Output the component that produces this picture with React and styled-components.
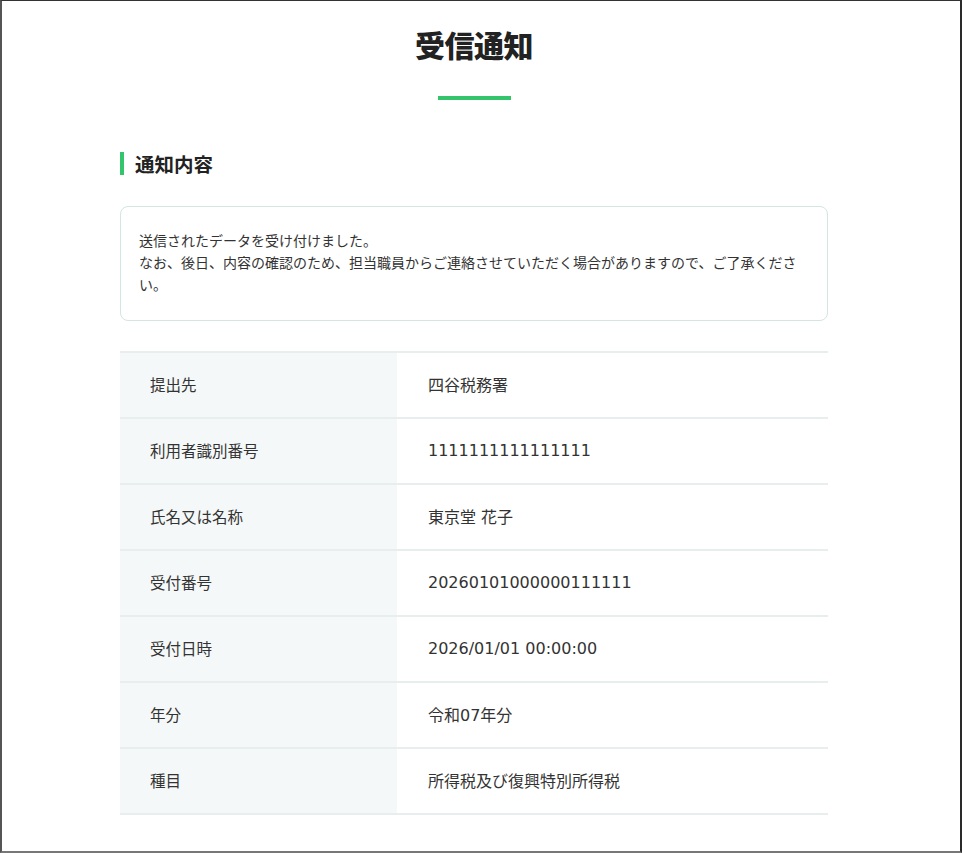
import React from "react";
import styled, { createGlobalStyle } from "styled-components";

/* ---------- styles ---------- */

const GlobalStyle = createGlobalStyle`
  html, body {
    margin: 0;
    padding: 0;
    background: #ffffff;
  }
  body {
    font-family: "DejaVu Sans", "Noto Sans CJK JP", sans-serif;
    color: #333333;
  }
  * {
    box-sizing: border-box;
  }
`;

const Frame = styled.div`
  height: 853px;
  border-top: 1px solid #333;
  border-left: 2px solid #555;
  border-right: 2px solid #2a2a2a;
  border-bottom: 2px solid #777;
  padding-right: 14px;
  overflow: hidden;
`;

const Main = styled.main`
  width: 708px;
  margin: 0 auto;
  display: flex;
  flex-direction: column;
`;

const PageTitle = styled.h1`
  margin: 21px 0 0;
  font-family: "Noto Sans CJK JP", sans-serif;
  font-size: 30px;
  line-height: 45px;
  font-weight: 900;
  color: #222;
  text-align: center;
  letter-spacing: -0.5px;
`;

const TitleBar = styled.div`
  width: 73px;
  height: 4px;
  margin: 29px auto 0;
  background: #34c56c;
`;

const SectionTitle = styled.h2`
  margin: 52px 0 0;
  padding-left: 11px;
  border-left: 4px solid #34c56c;
  font-family: "Noto Sans CJK JP", sans-serif;
  font-size: 19.5px;
  line-height: 23px;
  font-weight: 700;
  color: #222;
`;

const NoticeBox = styled.div`
  margin-top: 31px;
  border: 1px solid #d3e6e0;
  border-radius: 8px;
  padding: 22px 18px 25px;
  font-family: "Noto Sans CJK JP", sans-serif;
  font-size: 14px;
  line-height: 22px;
  color: #333;
`;

const InfoTable = styled.dl`
  margin: 30px 0 0;
  border-top: 2px solid #e8eded;
`;

const Row = styled.div`
  display: grid;
  grid-template-columns: 277px 1fr;
  height: 66px;
  border-bottom: 2px solid #e8eded;
`;

const Label = styled.dt`
  display: flex;
  align-items: center;
  padding-left: 30px;
  padding-bottom: 2px;
  background: #f5f8f8;
  font-family: "Noto Sans CJK JP", sans-serif;
  font-size: 15.5px;
  color: #333;
`;

const Value = styled.dd`
  margin: 0;
  display: flex;
  align-items: center;
  padding-left: 31px;
  padding-bottom: 2px;
  font-size: 16px;
  color: #333;
`;

/* ---------- data ---------- */

const rows = [
  ["提出先", "四谷税務署"],
  ["利用者識別番号", "1111111111111111"],
  ["氏名又は名称", "東京堂 花子"],
  ["受付番号", "20260101000000111111"],
  ["受付日時", "2026/01/01 00:00:00"],
  ["年分", "令和07年分"],
  ["種目", "所得税及び復興特別所得税"],
];

/* ---------- component ---------- */

export default function App() {
  return (
    <>
      <GlobalStyle />
      <Frame>
        <Main>
          <PageTitle>受信通知</PageTitle>
          <TitleBar />

          <SectionTitle>通知内容</SectionTitle>

          <NoticeBox>
            送信されたデータを受け付けました。
            <br />
            なお、後日、内容の確認のため、担当職員からご連絡させていただく場合がありますので、ご了承ください。
          </NoticeBox>

          <InfoTable>
            {rows.map(([label, value]) => (
              <Row key={label}>
                <Label>{label}</Label>
                <Value>{value}</Value>
              </Row>
            ))}
          </InfoTable>
        </Main>
      </Frame>
    </>
  );
}
